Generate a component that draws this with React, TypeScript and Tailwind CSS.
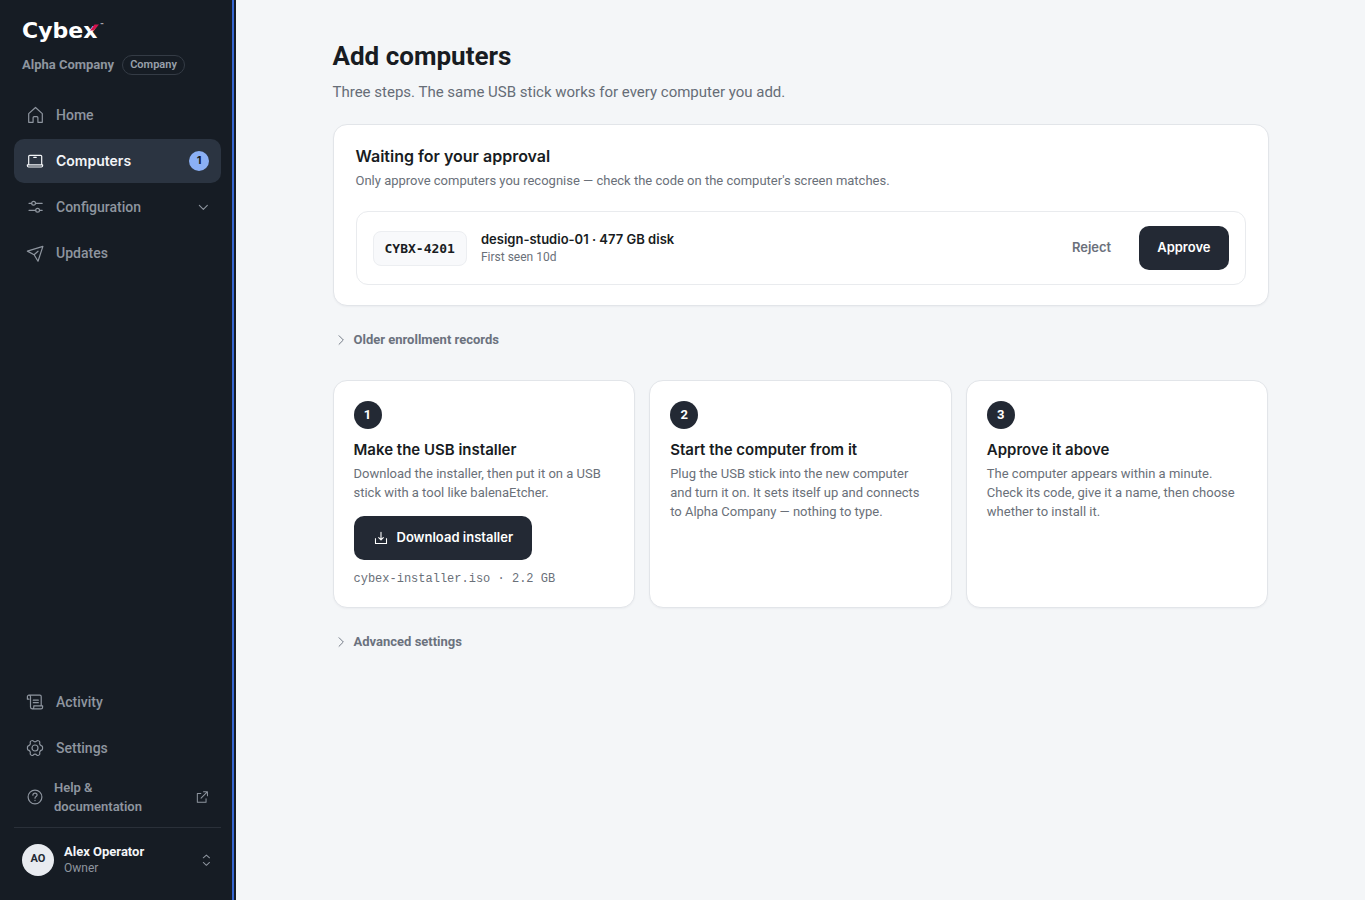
import type { ReactNode } from 'react';

function Icon({ children, className = 'size-[18px]' }: { children: ReactNode; className?: string }) {
  return (
    <svg
      viewBox="0 0 18 18"
      fill="none"
      stroke="currentColor"
      strokeWidth="1.2"
      strokeLinejoin="round"
      strokeLinecap="round"
      aria-hidden="true"
      className={`${className} shrink-0`}
    >
      {children}
    </svg>
  );
}

const HomeIcon = () => (
  <Icon>
    <path d="M2.7 16.3V7.6L9.5 1.5l6.8 6.1v8.7h-4.4v-4.6a1 1 0 0 0-1-1H8.1a1 1 0 0 0-1 1v4.6z" />
  </Icon>
);

const LaptopIcon = () => (
  <Icon>
    <path d="M2.7 12.7V4.3c0-.6.4-1 1-1h11c.6 0 1 .4 1 1v8.4M1.4 12.8h15.2v1c0 .7-.5 1.2-1.2 1.2H2.6c-.7 0-1.2-.5-1.2-1.2zM7.8 5.4h2.4" />
  </Icon>
);

const SlidersIcon = () => (
  <Icon>
    <path d="M3 5.3h2.6M9.6 5.3h6.6M3 12.3h6.6M13.6 12.3h2.6" />
    <circle cx="7.6" cy="5.3" r="1.9" />
    <circle cx="11.6" cy="12.3" r="1.9" />
  </Icon>
);

const SendIcon = () => (
  <Icon>
    <path d="M1.4 7.1 16.9 2.4 12 17.2 8.1 10.7zM8.1 10.7l3.9-3.5" />
  </Icon>
);

const ScrollIcon = () => (
  <Icon>
    <path d="M1.4 6.2V3.8c0-.9.7-1.6 1.5-1.6s1.6.7 1.6 1.6v10.3c0 1 .7 1.7 1.6 1.7h9c.9 0 1.5-.7 1.5-1.6v-1.4H7.8v1.4c0 .9-.7 1.6-1.6 1.6M2.9 2.2h11c.8 0 1.3.5 1.3 1.3v9.1M1.4 6.2H3M7.3 7.2h5M7.3 9.7h5" />
  </Icon>
);

const GearIcon = () => (
  <Icon>
    <path d="M6.6 1.5c.5 0 .8 1.3 2.4 1.3s1.9-1.3 2.4-1.3c.8 0 2.3.9 2.4 1.5.1.6-.6 1.3.2 2.6s1.7 1.1 2.2 1.6c.5.6.5 3 0 3.6-.5.5-1.4.3-2.2 1.6s-.1 2-.2 2.6c-.1.6-1.6 1.5-2.4 1.5-.5 0-.8-1.3-2.4-1.3s-1.9 1.3-2.4 1.3c-.8 0-2.3-.9-2.4-1.5-.1-.6.6-1.3-.2-2.6s-1.7-1.1-2.2-1.6c-.5-.6-.5-3 0-3.6.5-.5 1.4-.3 2.2-1.6s.1-2 .2-2.6c.1-.6 1.6-1.5 2.4-1.5z" />
    <circle cx="9" cy="9" r="3" />
  </Icon>
);

const HelpIcon = () => (
  <Icon>
    <circle cx="9" cy="9" r="6.9" />
    <path d="M6.9 7.2c0-1.2.9-2 2.1-2s2.1.8 2.1 1.9c0 1.5-2.1 1.5-2.1 3.1M9 12.4v.2" />
  </Icon>
);

const ExternalIcon = () => (
  <Icon className="size-3.5">
    <path strokeWidth="1.3" d="M7.5 4.5H3v11.2h11.2v-4.5M7.8 10.4l8-8M11 2.3h5v5" />
  </Icon>
);

const DownloadIcon = () => (
  <Icon className="size-4">
    <path strokeWidth="1.2" strokeLinecap="square" d="M2.8 9.8v5.300h12.400V9.800" />
    <path strokeWidth="1.2" d="M9 2.6v8.600M6.400 8.600 9 11.200l2.600-2.600" />
  </Icon>
);

const ChevronRight = () => (
  <Icon className="size-3.5">
    <path d="m6.5 3.5 5.5 5.5-5.5 5.5" />
  </Icon>
);

const ChevronDown = () => (
  <Icon className="size-3">
    <path strokeWidth="1.6" d="M3.5 6.5 9.500 12.500l6-6" />
  </Icon>
);

const UpDown = () => (
  <Icon className="size-3.5">
    <path strokeWidth="1.3" d="M5.500 6.2 9.500 2.600l4 3.600M5.500 12.200l4 3.600 4-3.600" />
  </Icon>
);

function NavItem({
  icon,
  label,
  active = false,
  children,
}: {
  icon: ReactNode;
  label: string;
  active?: boolean;
  children?: ReactNode;
}) {
  return (
    <a
      href="#"
      aria-current={active ? 'page' : undefined}
      className={`flex h-11 items-center gap-3 rounded-[10px] px-3 text-sm ${
        active ? "bg-[#2b3441] font-['Inter'] font-semibold text-[#f3f5f8]" : 'font-medium text-[#8e959f]'
      }`}
    >
      {icon}
      <span className="flex-1">{label}</span>
      {children}
    </a>
  );
}

function Sidebar() {
  return (
    <aside className="flex w-[236px] shrink-0 bg-[#161c24]">
      <div className="flex min-w-0 flex-1 flex-col pr-[11px] pl-3.5">
        <div className="px-2 pt-[18px]">
          <div className="relative w-[82px] font-['DejaVu_Sans'] text-[22px] leading-[26px] font-bold text-white">
            Cybex
            <svg viewBox="0 0 10 7" className="absolute top-1.5 right-1 h-[7px] w-2.5" aria-hidden="true">
              <path d="M0 6.5 4.5.6H9L3.5 6.5z" fill="#d3124f" />
            </svg>
            <span className="absolute top-1 right-0 text-[4px] leading-[6px]">™</span>
          </div>
          <div className="mt-[11px] flex items-center gap-2 whitespace-nowrap">
            <span className="text-[13px] font-bold text-[#8e959f]">Alpha Company</span>
            <span className="rounded-full border border-[#343b45] px-[7px] text-[11px] leading-[18px] font-semibold text-[#9aa1ab]">
              Company
            </span>
          </div>
        </div>
        <nav aria-label="Main" className="mt-[18px] flex flex-col gap-0.5">
          <NavItem icon={<HomeIcon />} label="Home" />
          <NavItem icon={<LaptopIcon />} label="Computers" active>
            <span className="flex size-5 items-center justify-center rounded-full bg-[#8bb0f5] text-[11px] font-bold text-[#161c24]">
              1
            </span>
          </NavItem>
          <NavItem icon={<SlidersIcon />} label="Configuration">
            <ChevronDown />
          </NavItem>
          <NavItem icon={<SendIcon />} label="Updates" />
        </nav>
        <nav aria-label="Secondary" className="mt-auto flex flex-col gap-0.5">
          <NavItem icon={<ScrollIcon />} label="Activity" />
          <NavItem icon={<GearIcon />} label="Settings" />
          <a
            href="#"
            className="flex items-center gap-2.5 px-3 py-1.5 text-[13px] leading-[19px] font-semibold text-[#8e959f]"
          >
            <HelpIcon />
            <span className="flex-1">
              Help &<br />
              documentation
            </span>
            <ExternalIcon />
          </a>
        </nav>
        <div className="mt-[5px] mb-5 border-t border-[#2a3039] pt-[11px]">
          <button type="button" className="flex w-full items-center gap-2.5 px-2 py-1 text-left text-[#8e959f]">
            <span className="flex size-8 items-center justify-center rounded-full bg-[#e8ebf0] text-[11px] font-bold text-[#222833]">
              AO
            </span>
            <span className="flex-1">
              <span className="block text-[13px] leading-[17px] font-bold text-[#f3f5f8]">Alex Operator</span>
              <span className="block text-xs leading-4">Owner</span>
            </span>
            <UpDown />
          </button>
        </div>
      </div>
      <div className="mr-0.5 w-0.5 bg-[#3565cf]" />
    </aside>
  );
}

function Step({ number, title, text, children }: { number: number; title: string; text: string; children?: ReactNode }) {
  return (
    <li className="rounded-[14px] border border-[#e2e5e9] bg-white p-5 shadow-[0_1px_2px_rgba(20,28,40,0.04)]">
      <span className="flex size-7 items-center justify-center rounded-full bg-[#232934] text-[13px] font-bold text-white">
        {number}
      </span>
      <h3 className="mt-[11px] font-['Inter'] text-[15px] leading-5 font-semibold text-[#181c22]">{title}</h3>
      <p className="mt-1 text-[13px] leading-[19px] text-[#6a7079]">{text}</p>
      {children}
    </li>
  );
}

function Disclosure({ label, content }: { label: string; content: string }) {
  return (
    <details className="mt-3">
      <summary className="flex h-11 w-fit cursor-pointer list-none items-center gap-1.5 pl-px text-[13px] font-bold text-[#6b727e]">
        <ChevronRight />
        {label}
      </summary>
      <p className="pl-[21px] text-[13px] text-[#6a7079]">{content}</p>
    </details>
  );
}

export default function App() {
  return (
    <div className="flex min-h-screen bg-[#f4f6f8] font-['Roboto',sans-serif] text-[#181c22]">
      <Sidebar />
      <main className="min-w-0 flex-1 px-8 pt-[39px] pb-10">
        <div className="mx-auto max-w-[936px]">
          <h1 className="text-[26px] leading-[34px] font-bold">Add computers</h1>
          <p className="mt-[7px] text-[15px] leading-6 text-[#666d77]">
            Three steps. The same USB stick works for every computer you add.
          </p>

          <section className="mt-5 rounded-[14px] border border-[#e2e5e9] bg-white px-[22px] py-5 shadow-[0_1px_2px_rgba(20,28,40,0.04)]">
            <h2 className="font-['Inter'] text-base leading-[22px] font-semibold">Waiting for your approval</h2>
            <p className="mt-1 text-[13px] leading-5 text-[#6a7079]">
              Only approve computers you recognise — check the code on the computer's screen matches.
            </p>
            <div className="mt-5 flex items-center gap-3.5 rounded-xl border border-[#e9ebee] px-4 py-3.5">
              <code className="rounded-lg border border-[#eceef1] bg-[#f8f9fb] px-[11px] py-2 font-['DejaVu_Sans_Mono',monospace] text-[13px] leading-[17px] font-bold">
                CYBX-4201
              </code>
              <div className="flex-1">
                <div className="font-['Inter'] text-[13px] leading-[18px] font-semibold">design-studio-01 · 477 GB disk</div>
                <div className="text-xs leading-[18px] text-[#6a7079]">First seen 10d</div>
              </div>
              <div className="flex gap-2.5 font-['Inter'] text-[13px] font-semibold">
                <button type="button" className="h-11 px-[18px] text-[#6b707b]">
                  Reject
                </button>
                <button type="button" className="h-11 rounded-[10px] bg-[#232934] px-[18px] text-white">
                  Approve
                </button>
              </div>
            </div>
          </section>

          <Disclosure label="Older enrollment records" content="No older records." />

          <ol className="mt-[18px] grid grid-cols-3 gap-3.5">
            <Step
              number={1}
              title="Make the USB installer"
              text="Download the installer, then put it on a USB stick with a tool like balenaEtcher."
            >
              <button
                type="button"
                className="mt-3.5 flex h-11 items-center gap-2 rounded-[10px] bg-[#232934] px-[19px] font-['Inter'] text-[13px] font-semibold text-white"
              >
                <DownloadIcon />
                Download installer
              </button>
              <p className="mt-[11px] font-['Liberation_Mono',monospace] text-xs leading-4 text-[#6a7079]">
                cybex-installer.iso · 2.2 GB
              </p>
            </Step>
            <Step
              number={2}
              title="Start the computer from it"
              text="Plug the USB stick into the new computer and turn it on. It sets itself up and connects to Alpha Company — nothing to type."
            />
            <Step
              number={3}
              title="Approve it above"
              text="The computer appears within a minute. Check its code, give it a name, then choose whether to install it."
            />
          </ol>

          <Disclosure label="Advanced settings" content="Default settings are in use." />
        </div>
      </main>
    </div>
  );
}
